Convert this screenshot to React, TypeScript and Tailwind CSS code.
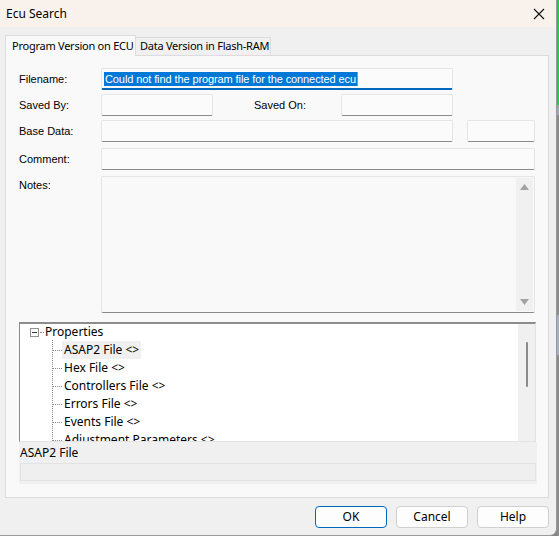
import React from 'react';

const ui = { fontFamily: '"Segoe UI", "Noto Sans", "Liberation Sans", sans-serif' };
const classic = { fontFamily: '"Liberation Sans", Arial, sans-serif' };

/** plain edit box, win11 style */
function Field({ w, h = 22 }: { w: number; h?: number }): React.JSX.Element {
  return (
    <div
      className="bg-[#fbfbfb] border border-[#e5e5e5] border-b-[#8a8a8a] rounded-[2px]"
      style={{ width: w, height: h }}
    />
  );
}

function Label({ text, w = 82 }: { text: string; w?: number }): React.JSX.Element {
  return (
    <div className="text-[11px] text-black shrink-0 whitespace-nowrap" style={{ ...classic, width: w }}>
      {text}
    </div>
  );
}

const treeItems = [
  'ASAP2 File <>',
  'Hex File <>',
  'Controllers File <>',
  'Errors File <>',
  'Events File <>',
  'Adjustment Parameters <>',
];

function PropertyTree(): React.JSX.Element {
  return (
    <div className="flex w-[517px] h-[120px] bg-white border-t-2 border-l border-t-[#8c8c8c] border-l-[#8c8c8c] border-r border-b border-r-[#e3e3e3] border-b-[#e3e3e3] overflow-hidden">
      <div className="flex-1 relative text-[12px] text-black overflow-hidden -mt-px" style={ui}>
        {/* root node */}
        <div className="flex items-center h-[18px] pl-[10px]">
          <span className="w-[9px] h-[9px] border border-[#919191] flex items-center justify-center bg-white">
            <span className="w-[5px] h-px bg-[#333]" />
          </span>
          <span className="w-[4px] border-t border-dotted border-[#8a8a8a] ml-px mr-px" />
          <span>Properties</span>
        </div>
        {/* vertical guide */}
        <div className="absolute left-[32px] top-[17px] bottom-0 border-l border-dotted border-[#8a8a8a]" />
        {treeItems.map((t, i) => (
          <div key={t} className="flex items-center h-[18px] pl-[33px]">
            <span className="w-[9px] border-t border-dotted border-[#8a8a8a]" />
            <span className={`px-[2px] leading-[18px] whitespace-nowrap ${i === 0 ? 'bg-[#f0f0f0]' : ''}`}>{t}</span>
          </div>
        ))}
      </div>
      <div className="w-[17px] bg-[#f0f0f0] flex justify-center pt-[18px]">
        <div className="w-[2px] h-[45px] bg-[#8a8a8a] rounded-full" />
      </div>
    </div>
  );
}

export default function App(): React.JSX.Element {
  return (
    <div className="flex w-[559px] h-[536px] bg-[#7d848c]">
      <div className="w-[557px] h-[536px] flex flex-col bg-[#f0f0f0] border-r border-b border-[#9a9a9a] rounded-br-[7px] overflow-hidden">
        {/* title bar */}
        <div className="h-[27px] bg-[#f9f1ec] flex items-center justify-between pl-[6px] pr-[7px] shrink-0">
          <span className="text-[12px] text-black" style={ui}>Ecu Search</span>
          <svg width="12" height="12" viewBox="0 0 12 12" className="mr-[4px]">
            <path d="M1 1 L11 11 M11 1 L1 11" stroke="#111" strokeWidth="1.1" />
          </svg>
        </div>

        {/* tabs */}
        <div className="flex items-end pl-[5px] pt-[7px] h-[28px] shrink-0 text-[11px] tracking-[-0.25px] text-black whitespace-nowrap" style={ui}>
          <div className="h-[21px] w-[131px] bg-[#f9f9f9] border border-b-0 border-[#dcdcdc] pl-[6px] flex items-center relative top-px z-10 overflow-hidden">
            Program Version on ECU
          </div>
          <div className="h-[18px] w-[135px] bg-[#f0f0f0] border-t border-r border-[#dcdcdc] pl-[4px] flex items-center overflow-hidden">
            Data Version in Flash-RAM
          </div>
        </div>

        {/* tab page */}
        <div className="ml-[5px] w-[544px] h-[443px] bg-[#f9f9f9] border border-[#dcdcdc] pl-[13px] pt-[12px] flex flex-col">
          <div className="flex items-center">
            <Label text="Filename:" />
            <div className="w-[352px] h-[22px] bg-[#fbfbfb] border border-[#e5e5e5] border-b-2 border-b-[#0067c0] rounded-[2px] flex items-center pl-[2px]">
              <span className="bg-[#0078d7] text-white text-[11px] leading-[14px] px-px whitespace-nowrap tracking-[-0.1px]" style={classic}>
                Could not find the program file for the connected ecu
              </span>
              <span className="w-px h-[14px] bg-[#ff7a00]" />
            </div>
          </div>

          <div className="flex items-center mt-[4px]">
            <Label text="Saved By:" />
            <Field w={112} />
            <span className="w-[41px]" />
            <Label text="Saved On:" w={87} />
            <Field w={112} />
          </div>

          <div className="flex items-center mt-[4px]">
            <Label text="Base Data:" />
            <Field w={352} />
            <span className="w-[14px]" />
            <Field w={68} />
          </div>

          <div className="flex items-center mt-[6px]">
            <Label text="Comment:" />
            <Field w={434} />
          </div>

          <div className="flex items-start mt-[6px]">
            <div className="pt-px">
              <Label text="Notes:" />
            </div>
            <div className="w-[434px] h-[137px] bg-[#f9f9f9] border border-[#e5e5e5] border-b-[#8a8a8a] rounded-[2px] flex justify-end p-px">
              <div className="w-[17px] h-full bg-[#f0f0f0] flex flex-col items-center justify-between py-[6px]">
                <svg width="9" height="6" viewBox="0 0 9 6"><path d="M4.5 0 L9 6 L0 6 Z" fill="#a3a3a3" /></svg>
                <svg width="9" height="6" viewBox="0 0 9 6"><path d="M0 0 L9 0 L4.5 6 Z" fill="#a3a3a3" /></svg>
              </div>
            </div>
          </div>

          <div className="mt-[9px]">
            <PropertyTree />
          </div>

          {/* status / description */}
          <div className="w-[518px] h-[42px] bg-[#f0f0f0] flex flex-col pl-px">
            <span className="text-[12px] text-black leading-[20px] mt-[1px]" style={ui}>ASAP2 File</span>
            <div className="w-[516px] h-[18px] border border-[#e3e3e3] bg-[#efefef]" />
          </div>
        </div>

        {/* buttons */}
        <div className="flex justify-end gap-[9px] pr-[7px] mt-[8px] text-[12px] text-black" style={ui}>
          <button className="w-[72px] h-[22px] bg-[#fdfdfd] border border-[#0067c0] rounded-[4px]">OK</button>
          <button className="w-[72px] h-[22px] bg-[#fdfdfd] border border-[#d0d0d0] rounded-[4px]">Cancel</button>
          <button className="w-[72px] h-[22px] bg-[#fdfdfd] border border-[#d0d0d0] rounded-[4px]">Help</button>
        </div>
      </div>
      <div className="w-[2px] flex flex-col">
        <div className="h-[105px] bg-[#1fcc3a]" />
        <div className="h-[10px] bg-[#9aa6b4]" />
        <div className="h-[200px] bg-[#8b8b8b]" />
        <div className="h-[40px] bg-[#a4b0be]" />
        <div className="flex-1 bg-[#8b8b8b]" />
      </div>
    </div>
  );
}
